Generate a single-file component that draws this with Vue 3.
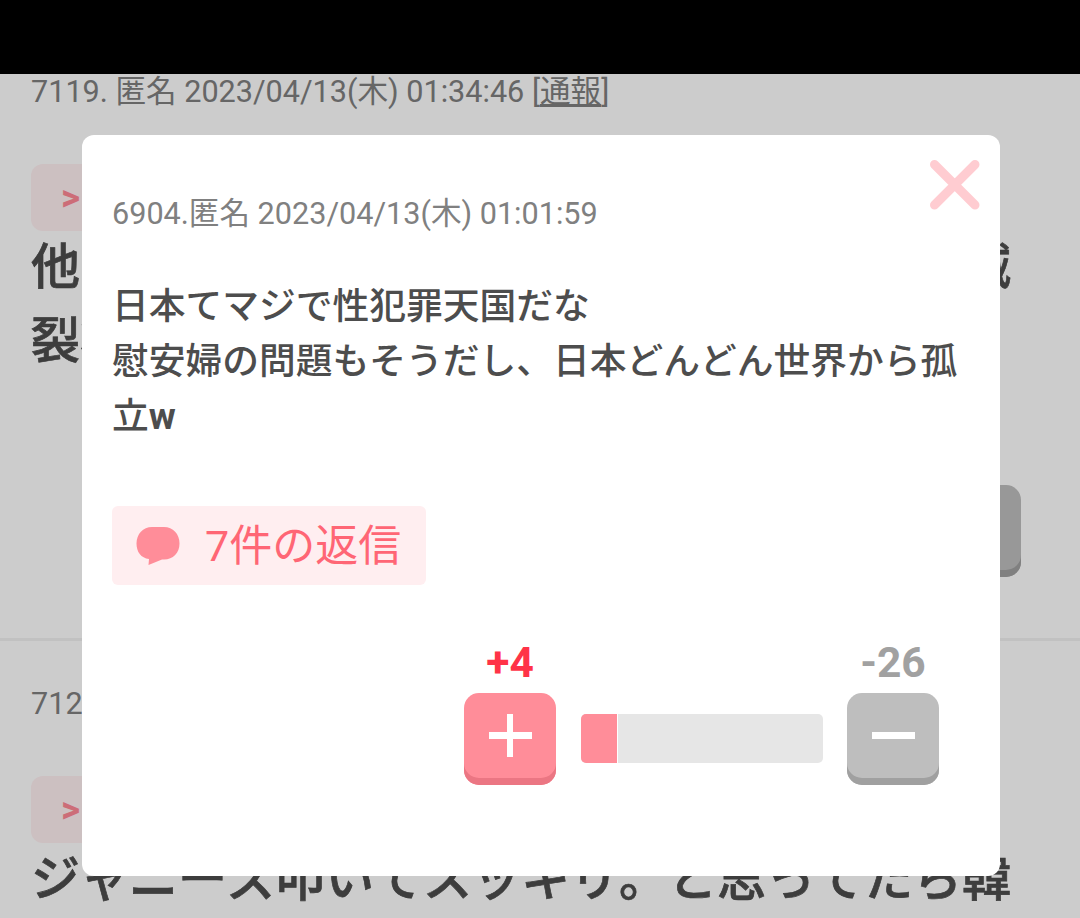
<template>
  <div class="screen">
    <div class="status-bar"></div>

    <div class="posts">
      <article class="post">
        <div class="meta">7119. 匿名 2023/04/13(木) 01:34:46 [<a class="report">通報</a>]</div>
        <a class="anchor">&gt;</a>
        <div class="post-body">
          <div class="spread"><span>他</span><span>滅</span></div>
          <div>裂状</div>
        </div>
        <div class="post-votes">
          <button class="btn minus"><i class="bar-h"></i></button>
        </div>
      </article>
      <article class="post">
        <div class="meta">712</div>
        <a class="anchor">&gt;</a>
        <div class="post-body">ジャニーズ叩いてスッキリ。と思ってたら韓</div>
      </article>
    </div>

    <div class="overlay"></div>

    <div class="modal">
      <svg class="close" viewBox="0 0 50 50" @click="open = false">
        <path d="M4.5 4.5 45 45M45 4.5 4.5 45" />
      </svg>
      <div class="meta">6904.匿名 2023/04/13(木) 01:01:59</div>
      <p class="comment">日本てマジで性犯罪天国だな<br />慰安婦の問題もそうだし、日本どんどん世界から孤立<b>w</b></p>
      <a class="replies">
        <svg class="bubble" viewBox="0 0 44 38">
          <path d="M16 0H28C37 0 43.500 7 43.500 16.500S37 32.500 28 32.500H26L12.500 38L13 32C5 31 .5 25 .5 16.500C.5 7 7 0 16 0Z" />
        </svg>
        <span class="replies-label">7件の返信</span>
      </a>
      <div class="votes">
        <div class="vote">
          <span class="score up">+{{ plus }}</span>
          <button class="btn plus"><i class="bar-h"></i><i class="bar-v"></i></button>
        </div>
        <div class="graph">
          <div class="fill" :style="{ width: ratio + '%' }"></div>
        </div>
        <div class="vote">
          <span class="score down">-{{ minus }}</span>
          <button class="btn minus"><i class="bar-h"></i></button>
        </div>
      </div>
    </div>
  </div>
</template>

<script setup>
import { computed, ref } from 'vue'

const plus = ref(4)
const minus = ref(26)
const open = ref(true)

const ratio = computed(() => Math.round((plus.value / (plus.value + minus.value)) * 1000) / 10 + 2)
</script>

<style>
body {
  margin: 0;
  background: #fff;
}
</style>

<style scoped>
.screen {
  position: relative;
  width: 1080px;
  height: 918px;
  overflow: hidden;
  background: #fff;
  color: #4d4d4d;
  font-family: Roboto, "Noto Sans CJK JP", sans-serif;
  font-kerning: none;
}

.status-bar {
  position: relative;
  z-index: 3;
  height: 74px;
  background: #000;
}

.posts {
  margin-top: -45px;
}

.post {
  box-sizing: border-box;
  height: 612px;
  padding: 47px 31px 0;
  border-bottom: 3px solid #f2f2f2;
}

.meta {
  height: 32px;
  line-height: 32px;
  font-size: 30.6px;
  color: #808080;
  white-space: nowrap;
}

.report {
  text-decoration: underline;
}

.anchor {
  display: block;
  box-sizing: border-box;
  width: 180px;
  height: 67px;
  margin-top: 56px;
  padding-left: 30px;
  border-radius: 12px;
  background: #fff0f2;
  color: #ff8996;
  font-size: 37px;
  font-weight: bold;
  line-height: 68px;
}

.post-body {
  height: 254px;
  font-size: 49px;
  font-weight: 500;
  line-height: 73.5px;
  white-space: nowrap;
  -webkit-text-stroke: .7px #4d4d4d;
}

.spread {
  display: flex;
  justify-content: space-between;
  width: 980px;
}

.post-votes {
  display: flex;
  justify-content: flex-end;
  margin-right: 28px;
}

.overlay {
  position: absolute;
  inset: 0;
  z-index: 1;
  background: rgba(0, 0, 0, .2);
}

.modal {
  position: absolute;
  top: 135px;
  left: 82px;
  z-index: 2;
  box-sizing: border-box;
  width: 918px;
  height: 741px;
  padding: 63px 30px 0;
  border-radius: 12px;
  background: #fff;
}

.close {
  position: absolute;
  top: 25px;
  right: 20px;
  width: 50px;
  height: 50px;
  fill: none;
  stroke: #ffccd1;
  stroke-width: 9;
  stroke-linecap: round;
}

.comment {
  margin: 49px 0 62px;
  font-size: 36.75px;
  font-weight: 500;
  line-height: 55px;
}

.replies {
  display: flex;
  align-items: center;
  box-sizing: border-box;
  width: 314px;
  height: 79px;
  padding-left: 24px;
  border-radius: 6px;
  background: #ffeef0;
  color: #ff6675;
  font-size: 43px;
}

.replies-label {
  padding-bottom: 7px;
}

.bubble {
  width: 44px;
  height: 38px;
  margin-right: 25px;
  fill: #ff8d99;
}

.votes {
  display: flex;
  justify-content: flex-end;
  align-items: flex-end;
  gap: 24px;
  margin: 56px 31px 0 0;
}

.vote {
  display: flex;
  flex-direction: column;
  align-items: center;
}

.score {
  height: 52px;
  line-height: 44px;
  font-size: 42.5px;
  font-weight: bold;
}

.up {
  color: #ff3347;
}

.down {
  color: #a1a1a1;
}

.btn {
  position: relative;
  width: 92px;
  height: 92px;
  padding: 0;
  border: 0;
  border-radius: 15px;
}

.plus {
  background: #ff8d99;
  box-shadow: inset 0 -7px #eb7683;
}

.minus {
  background: #bebebe;
  box-shadow: inset 0 -7px #a0a0a0;
}

.bar-h,
.bar-v {
  position: absolute;
  background: #fff;
}

.bar-h {
  top: 39px;
  left: 25px;
  width: 43px;
  height: 7px;
}

.bar-v {
  top: 21px;
  left: 43px;
  width: 6px;
  height: 43px;
}

.graph {
  width: 242px;
  height: 49px;
  margin: 0 0 22px 1px;
  border-radius: 5px;
  background: #e6e6e6;
  overflow: hidden;
}

.fill {
  box-sizing: border-box;
  height: 100%;
  border-right: 1px solid #fff;
  background: #ff8d99;
}
</style>
